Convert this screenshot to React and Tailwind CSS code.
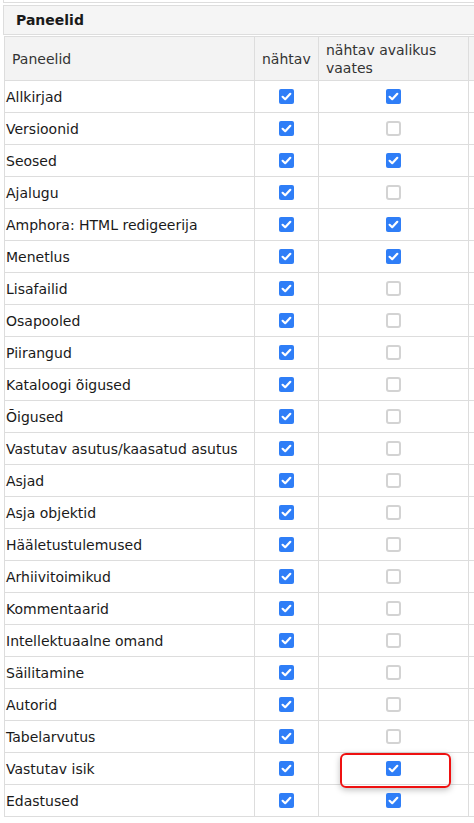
import React from 'react';

const panels = [
  { name: 'Allkirjad', pub: true },
  { name: 'Versioonid', pub: false },
  { name: 'Seosed', pub: true },
  { name: 'Ajalugu', pub: false },
  { name: 'Amphora: HTML redigeerija', pub: true },
  { name: 'Menetlus', pub: true },
  { name: 'Lisafailid', pub: false },
  { name: 'Osapooled', pub: false },
  { name: 'Piirangud', pub: false },
  { name: 'Kataloogi õigused', pub: false },
  { name: 'Õigused', pub: false },
  { name: 'Vastutav asutus/kaasatud asutus', pub: false },
  { name: 'Asjad', pub: false },
  { name: 'Asja objektid', pub: false },
  { name: 'Hääletustulemused', pub: false },
  { name: 'Arhiivitoimikud', pub: false },
  { name: 'Kommentaarid', pub: false },
  { name: 'Intellektuaalne omand', pub: false },
  { name: 'Säilitamine', pub: false },
  { name: 'Autorid', pub: false },
  { name: 'Tabelarvutus', pub: false },
  { name: 'Vastutav isik', pub: true, highlight: true },
  { name: 'Edastused', pub: true },
];

function Check({ checked }) {
  if (!checked) {
    return (
      <span className="inline-block w-[15px] h-[15px] rounded-[3px] border-2 border-[#d3d3d3] bg-white align-middle" />
    );
  }
  return (
    <span className="inline-flex w-[15px] h-[15px] rounded-[2px] bg-[#2f7ef7] items-center justify-center align-middle">
      <svg width="15" height="15" viewBox="0 0 15 15">
        <path d="M3.6 7.8 L6.2 10.2 L11.3 4.8" fill="none" stroke="white" strokeWidth="2.2" strokeLinecap="round" strokeLinejoin="round" />
      </svg>
    </span>
  );
}

export default function App() {
  return (
    <div className="w-[474px] h-[823px] overflow-hidden bg-white text-[14px] text-[#1a1a1a]" style={{ fontFamily: '"DejaVu Sans", Verdana, sans-serif' }}>
      {/* bottom edge of the block above */}
      <div className="ml-[3px] h-[3px] border-l border-b border-[#dddddd]" />

      {/* Panel header */}
      <div className="mt-[2px] ml-[3px] h-[30px] flex items-center pl-[12px] pt-[1px] bg-[#f5f5f5] border border-r-0 border-[#dddddd] font-bold text-[#1a1a1a]">
        Paneelid
      </div>

      {/* Table */}
      <div className="relative mt-[1px] ml-[4px]">
        <table className="table-fixed border-collapse w-[520px]">
          <colgroup>
            <col className="w-[250px]" />
            <col className="w-[64px]" />
            <col className="w-[150px]" />
            <col className="w-[56px]" />
          </colgroup>
          <thead>
            <tr className="h-[44px] bg-[#f3f3f3] text-[#333]">
              <th className="border border-[#dddddd] font-normal text-left pl-[7px] leading-[18px]">Paneelid</th>
              <th className="border border-[#dddddd] font-normal text-left pl-[7px] leading-[18px]">nähtav</th>
              <th className="border border-[#dddddd] font-normal text-left pl-[7px] pr-[2px] leading-[18px]">nähtav avalikus vaates</th>
              <th className="border border-[#dddddd]" />
            </tr>
          </thead>
          <tbody>
            {panels.map((p) => (
              <tr key={p.name} className="h-[32px]">
                <td className="border border-[#dddddd] pl-[1px] pt-[2px] whitespace-nowrap">{p.name}</td>
                <td className="border border-[#dddddd] text-center leading-none">
                  <Check checked />
                </td>
                <td className="border border-[#dddddd] text-center leading-none relative">
                  <Check checked={p.pub} />
                  {p.highlight && (
                    <div className="absolute left-[21px] top-[0px] w-[111px] h-[35px] rounded-[6px] border-2 border-[#ee1111] shadow-[0_2px_6px_rgba(0,0,0,0.25)]" />
                  )}
                </td>
                <td className="border border-[#dddddd]" />
              </tr>
            ))}
          </tbody>
        </table>
      </div>
    </div>
  );
}
